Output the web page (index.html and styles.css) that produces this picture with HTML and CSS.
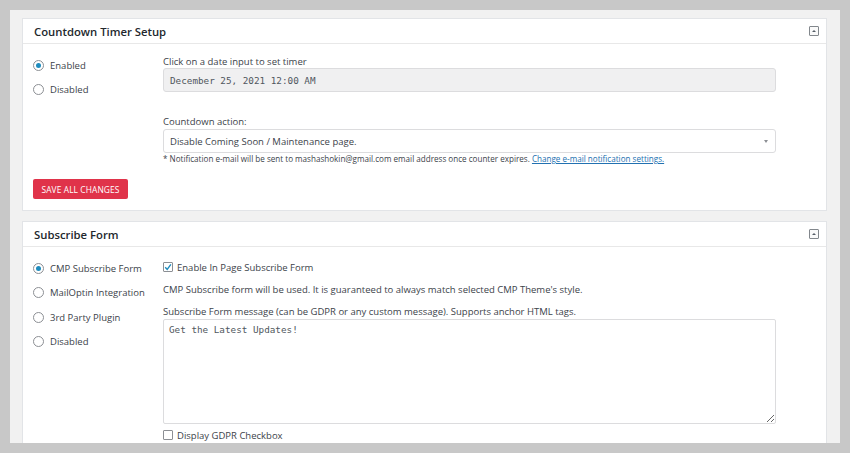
FILE: index.html
```html
<!DOCTYPE html>
<html>
<head>
<meta charset="utf-8">
<link rel="stylesheet" href="styles.css">
</head>
<body>
<div class="frame">
  <section class="panel panel-timer">
    <header class="panel-head">
      <h2>Countdown Timer Setup</h2>
      <span class="toggle"></span>
    </header>
    <div class="panel-body">
      <div class="cols">
        <div class="choices">
          <label class="choice"><span class="radio on"></span>Enabled</label>
          <label class="choice"><span class="radio"></span>Disabled</label>
        </div>
        <div class="fields">
          <div class="lbl">Click on a date input to set timer</div>
          <div class="input mono ro">December 25, 2021 12:00 AM</div>
          <div class="lbl lbl-gap">Countdown action:</div>
          <div class="input select">Disable Coming Soon / Maintenance page.<span class="arrow"></span></div>
          <div class="note">* Notification e-mail will be sent to mashashokin@gmail.com email address once counter expires. <a href="#">Change e-mail notification settings.</a></div>
        </div>
      </div>
      <button class="save">SAVE ALL CHANGES</button>
    </div>
  </section>

  <section class="panel panel-sub">
    <header class="panel-head">
      <h2>Subscribe Form</h2>
      <span class="toggle"></span>
    </header>
    <div class="panel-body">
      <div class="cols">
        <div class="choices choices-sub">
          <label class="choice"><span class="radio on"></span>CMP Subscribe Form</label>
          <label class="choice"><span class="radio"></span>MailOptin Integration</label>
          <label class="choice"><span class="radio"></span>3rd Party Plugin</label>
          <label class="choice"><span class="radio"></span>Disabled</label>
        </div>
        <div class="fields fields-sub">
          <label class="check-row"><span class="check on"><svg viewBox="0 0 10 10" width="10" height="10"><path d="M2.2 5.2 L4.2 7.4 L7.9 2.4" fill="none" stroke="#1e8cbe" stroke-width="1.4"/></svg></span>Enable In Page Subscribe Form</label>
          <div class="lbl info">CMP Subscribe form will be used. It is guaranteed to always match selected CMP Theme's style.</div>
          <div class="lbl msg">Subscribe Form message (can be GDPR or any custom message). Supports anchor HTML tags.</div>
          <textarea class="area mono">Get the Latest Updates!</textarea>
          <label class="check-row gdpr"><span class="check"></span>Display GDPR Checkbox</label>
        </div>
      </div>
    </div>
  </section>
</div>
</body>
</html>
```

FILE: styles.css
```css
* { box-sizing: border-box; }
html, body { margin: 0; padding: 0; }
body {
  background: #c8c8c8;
  font-family: "Open Sans", "Noto Sans", sans-serif;
  color: #3c434a;
  width: 850px;
  height: 453px;
  overflow: hidden;
}
.frame {
  margin: 10px;
  height: 433px;
  background: #f1f1f1;
  padding: 8px 13px 0 12px;
  overflow: hidden;
}
.panel {
  background: #fff;
  border: 1px solid #e2e4e7;
}
.panel-sub { margin-top: 10px; }
.panel-head {
  height: 25px;
  border-bottom: 1px solid #e8e8e8;
  display: flex;
  align-items: center;
  justify-content: space-between;
  padding: 0 7px 0 11px;
}
.panel-head h2 {
  margin: 0;
  font-size: 11.3px;
  font-weight: 600;
  color: #23282d;
}
.toggle {
  position: relative;
  width: 10px;
  height: 10px;
  border: 1px solid #82878c;
  border-radius: 1px;
  background: #fafafa;
}
.toggle::after {
  content: "";
  position: absolute;
  left: 2px;
  top: 2.5px;
  border-left: 2px solid transparent;
  border-right: 2px solid transparent;
  border-bottom: 2px solid #555d66;
}
.panel-body {
  padding: 9px 0 11px 10px;
}
.cols {
  display: grid;
  grid-template-columns: 130px 613px;
}
.choices { display: flex; flex-direction: column; }
.choice {
  height: 24px;
  display: flex;
  align-items: center;
  font-size: 9.5px;
  color: #3c434a;
}
.choices-sub .choice { height: 24.5px; }
.radio {
  width: 11px;
  height: 11px;
  border-radius: 50%;
  border: 1px solid #8c8f94;
  margin-right: 6px;
  display: inline-flex;
  align-items: center;
  justify-content: center;
  background: #fff;
}
.radio.on::after {
  content: "";
  width: 5px;
  height: 5px;
  border-radius: 50%;
  background: #1e8cbe;
}
.fields { padding-top: 3px; }
.lbl {
  font-size: 9.5px;
  line-height: 12px;
  height: 12px;
  white-space: nowrap;
}
.lbl-gap { margin-top: 24px; margin-bottom: 1px; }
.mono { font-family: "DejaVu Sans Mono", "Liberation Mono", monospace; }
.input {
  height: 24px;
  border: 1px solid #dcdcde;
  border-radius: 3px;
  display: flex;
  align-items: center;
  padding: 0 6px;
  font-size: 9.5px;
  color: #3c434a;
  position: relative;
}
.input.ro { background: #f0f0f1; }
.input.mono { font-size: 9.3px; color: #50575e; }
.select { background: #fff; }
.arrow {
  position: absolute;
  right: 7px;
  top: 10px;
  border-left: 2.5px solid transparent;
  border-right: 2.5px solid transparent;
  border-top: 3px solid #8c8f94;
}
.note {
  font-size: 8.1px;
  line-height: 12px;
  white-space: nowrap;
  color: #3c434a;
}
.note a { color: #2271b1; }
.save {
  margin-top: 14px;
  height: 20px;
  width: 95px;
  padding: 0;
  border: 0;
  border-radius: 2px;
  background: #e0334a;
  color: #fff;
  font-family: "Open Sans", "Noto Sans", sans-serif;
  font-size: 8.4px;
  letter-spacing: 0.1px;
}
.fields-sub { padding-top: 5px; }
.check-row {
  display: flex;
  align-items: center;
  height: 12px;
  font-size: 9.5px;
}
.check {
  width: 10px;
  height: 10px;
  border: 1px solid #8c8f94;
  border-radius: 1px;
  margin-right: 4px;
  display: inline-flex;
  align-items: center;
  justify-content: center;
  background: #fff;
}
.check svg { display: block; margin: -1px; }
.info { margin-top: 11px; }
.msg { margin-top: 10px; }
.area {
  display: block;
  margin-top: 1px;
  width: 613px;
  height: 105px;
  border: 1px solid #dcdcde;
  border-radius: 2px;
  padding: 4px 5px;
  font-size: 9.3px;
  color: #50575e;
  outline: none;
}
.gdpr { margin-top: 5px; }
```
